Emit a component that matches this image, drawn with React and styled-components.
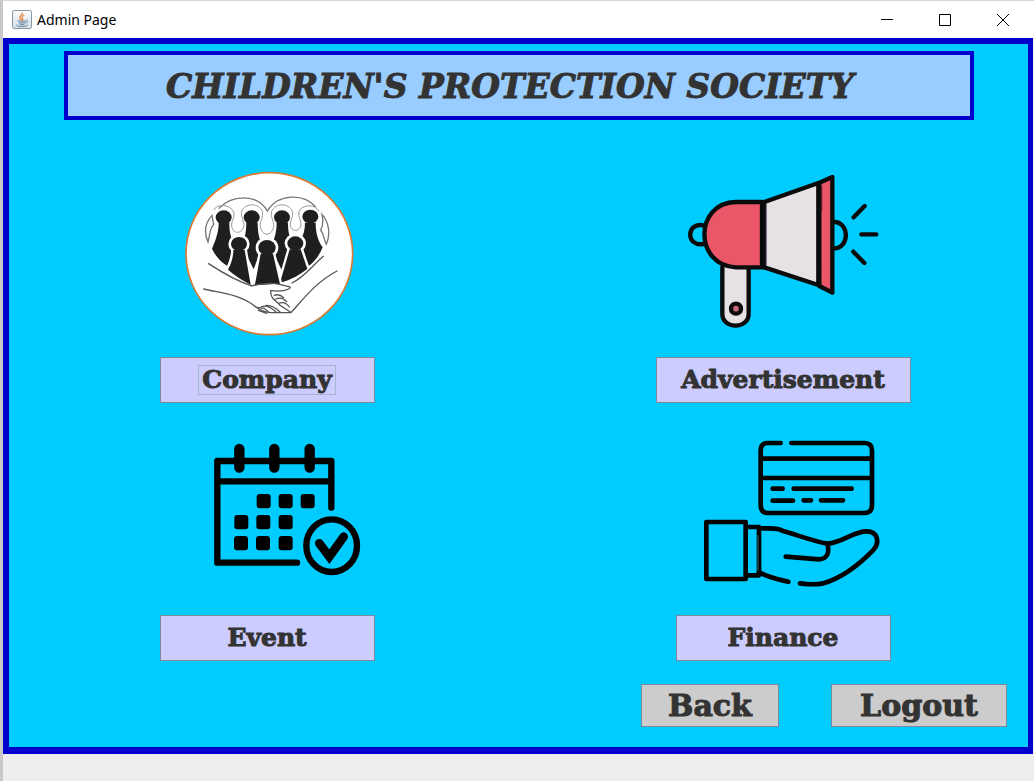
import React from "react";
import styled, { createGlobalStyle } from "styled-components";

const GlobalStyle = createGlobalStyle`
  *, *::before, *::after { box-sizing: border-box; }
  body { margin: 0; background: #eeeeee; }
`;

const slab = `"Rockwell Extra Bold", "DejaVu Serif", serif`;

const Window = styled.div`
  min-height: 100vh;
  background: #eeeeee;
  border-top: 1px solid #d6d6d6;
  border-left: 3px solid #c8c8c8;
  padding-right: 1px;
`;

const TitleBar = styled.header`
  display: flex;
  align-items: center;
  height: 37px;
  margin-right: -1px;
  padding: 0 2px 0 9px;
  background: #ffffff;
`;

const WindowTitle = styled.span`
  flex: 1;
  margin-left: 5px;
  font: 14px/20px "Segoe UI", "Noto Sans", sans-serif;
  color: #000000;
`;

const WindowButton = styled.button`
  display: flex;
  align-items: center;
  justify-content: center;
  width: 58px;
  height: 36px;
  padding: 0;
  border: 0;
  background: transparent;
`;

const Panel = styled.main`
  display: flex;
  flex-direction: column;
  padding: 7px 0 20px;
  background: #00ccff;
  border: solid #0000cc;
  border-width: 6px 5px 7px 6px;
`;

const Banner = styled.h1`
  display: flex;
  align-items: center;
  justify-content: center;
  height: 69px;
  margin: 0 54px 50px 55px;
  padding: 2px 18px 0 0;
  border: 4px solid #0000cc;
  background: #99ccff;
  color: #333333;
  font: italic bold 33px/40px ${slab};
  -webkit-text-stroke: 1px #333333;
  white-space: nowrap;
`;

const Tiles = styled.div`
  display: grid;
  grid-template-columns: 1fr 1fr;
  gap: 25px 36px;
  padding: 0 5px 0 18px;
`;

const Tile = styled.section`
  display: flex;
  flex-direction: column;
  align-items: center;
  gap: 19px;
`;

const Picture = styled.svg`
  display: block;
  width: 194px;
  height: 168px;
`;

const SwingButton = styled.button`
  display: flex;
  align-items: center;
  justify-content: center;
  padding: 0;
  border: 1px solid #7a8a99;
  border-radius: 0;
  color: #333333;
  font-family: ${slab};
  font-weight: bold;
  -webkit-text-stroke: 1px #333333;
  white-space: nowrap;
`;

const MenuButton = styled(SwingButton)`
  width: ${(p) => (p.$wide ? 255 : 215)}px;
  height: 46px;
  background: #ccccff;
  font-size: 25px;
  line-height: 28px;
`;

const ButtonLabel = styled.span`
  padding: 0 3px;
  border: 1px solid ${(p) => (p.$focused ? "#a3b8cc" : "transparent")};
`;

const Actions = styled.footer`
  display: flex;
  justify-content: flex-end;
  gap: 52px;
  margin-top: 23px;
  padding-right: 21px;
`;

const ActionButton = styled(SwingButton)`
  width: ${(p) => (p.$wide ? 176 : 138)}px;
  height: 43px;
  background: #cccccc;
  font-size: 30px;
  line-height: 36px;
`;

function JavaIcon() {
  return (
    <svg width="20" height="19" viewBox="0 0 60 57" fill="none" aria-hidden="true">
      <defs>
        <linearGradient id="java-tile" x1="0" y1="0" x2="0" y2="1">
          <stop offset="0" stopColor="#ffffff" />
          <stop offset="1" stopColor="#d3dde5" />
        </linearGradient>
      </defs>
      <rect x="1.5" y="1.5" width="57" height="54" rx="5" fill="url(#java-tile)" stroke="#8397a7" strokeWidth="3" />
      <path d="M30 8c5 6-9 9-7 16 1 4 5 5 6 8M37 15c-7 3-10 7-5 11 2 3 0 5-2 7" stroke="#e58b45" strokeWidth="4" />
      <path d="M17 31c-4 3 22 4 25 1M20 37c2 3 15 3 19 0M41 31c10-1 6 9-1 8M22 42c3 3 11 3 16 0M16 44c-10 6 24 8 31 1" stroke="#5b82a1" strokeWidth="3" />
    </svg>
  );
}

function Pawn({ x, y, r = 21, d }) {
  return (
    <g>
      <path d={d} fill="#fff" stroke="#fff" strokeWidth="14" strokeLinejoin="round" />
      <ellipse cx={x} cy={y} rx={r + 11} ry={r + 8} fill="#fff" />
      <path d={d} fill="#211e20" />
      <ellipse cx={x} cy={y} rx={r + 3} ry={r} fill="#211e20" />
    </g>
  );
}

function CompanyPicture() {
  return (
    <Picture viewBox="0 30 582 504" aria-hidden="true">
      <ellipse cx="298" cy="281" rx="250" ry="243" fill="#fff" stroke="#d97a35" strokeWidth="5" />
      <Pawn x={161} y={172} d="M146 188h32c0 24 3 42 12 54l-2 30-16 46c-20-12-36-30-46-52 10-24 20-48 20-78z" />
      <Pawn x={245} y={172} d="M229 188h34c0 30 5 52 14 68l-26 72-36-72c10-20 14-42 14-68z" />
      <Pawn x={336} y={172} d="M320 188h34c0 26 4 46 14 62l-30 87-36-77c11-20 18-44 18-72z" />
      <Pawn x={421} y={170} d="M405 188h32c0 30 6 52 21 74-9 22-23 42-42 56l-26-78c10-12 15-30 15-52z" />
      <Pawn x={207} y={252} d="M190 270h34l18 104c-24-12-48-27-68-45 10-18 16-38 16-59z" />
      <Pawn x={376} y={250} d="M359 268h33l20 58c-22 18-48 33-82 42z" />
      <Pawn x={291} y={263} r={23} d="M272 281h37l21 92-76 6z" />
      <g fill="none" stroke="#777" strokeWidth="4">
        <path d="M146 146c38-42 115-47 146 7 32-53 110-54 145-12" />
        <path d="M126 166c-20 22-25 50-12 80 6-19 4-42 17-52zM456 163c20 22 27 58 13 90-7-12-6-29-17-43 8-15 8-30 4-47z" />
      </g>
      <g fill="none" stroke="#999" strokeWidth="3">
        <path d="M131 150c10-20 50-18 60 6 5 20-8 26-6 42 4 26 30 24 36 2 4-16-10-26-6-46 10-26 52-26 62 0 4 20-8 28-6 46 6 30 34 30 40 0 2-18-10-26-6-46 10-26 52-26 62 0 4 20-8 26-6 44 6 18 24 18 32 0 2-18-10-26-6-44 10-22 50-22 60 0" />
      </g>
      <path d="M116 311c35 23 80 48 134 67 39-14 75-6 106 4 32-20 60-52 104-94l41 47c-55 34-91 72-137 124l-31 3h-75c-42-42-101-57-157-74z" fill="#fff" />
      <path d="M253 376l23-17h34l18 9-24 5z" fill="#211e20" />
      <g fill="none" stroke="#555" strokeWidth="4" strokeLinecap="round">
        <path d="M116 311c36 24 84 52 130 67 17-7 62-11 86-4 21 7 36 4 24 13-16 8-30 8-54 5" />
        <path d="M366 369c38-18 56-47 94-80M501 333c-63 34-94 76-138 125h-60c-23 0-41-12-56-25-38-29-94-34-146-46" />
        <path d="M302 392c-2 25 18 30 28 44l31 20M313 406c13-5 20-1 28 7M317 417c12-5 23-3 33 8M326 430c13-5 24-1 32 11M260 442l23 3 15 13M265 451l25 9M275 440c14-5 28 2 44 17M288 436c16-1 29 7 42 20" />
      </g>
    </Picture>
  );
}

function MegaphonePicture() {
  return (
    <Picture viewBox="48 30 582 504" aria-hidden="true">
      <g stroke="#0b0b0b" strokeWidth="13" strokeLinejoin="round" strokeLinecap="round">
        <path d="M100 196c-52-10-53 65 0 56M493 186c46 1 46 78 0 79" fill="none" />
        <path d="M157 322v139c0 48 79 48 79 0V322" fill="#e6e1e5" />
        <path d="M276 126h-79c-125 3-125 190 0 196h79z" fill="#eb5769" />
        <path d="M283 126L445 69v306L283 322z" fill="#e6e1e5" />
        <path d="M448 68l39-17v347l-39-20z" fill="#eb5769" />
        <path d="M281 126v196" fill="none" />
        <circle cx="198" cy="446" r="15" fill="#c3677b" />
        <path d="M551 172l33-34M574 223h45M550 275l33 34" fill="none" />
      </g>
      <path d="M289 132v185" stroke="#85758d" strokeWidth="3" />
      <path d="M455 78v75" stroke="#66222c" strokeWidth="4" />
    </Picture>
  );
}

const calendarDays = [
  [170, 192], [236, 192], [302, 192],
  [103, 255], [169, 255], [236, 255],
  [102, 318], [168, 318], [236, 318],
];

function CalendarPicture() {
  return (
    <Picture viewBox="-90 -6 582 504" aria-hidden="true">
      <g fill="none" stroke="#000" strokeWidth="19" strokeLinecap="round" strokeLinejoin="round">
        <path d="M291 398H52V93h342v140M52 154h342" />
        <path d="M118 57v56M223 57v56M329 57v56" strokeWidth="31" />
        <ellipse cx="395" cy="347" rx="76" ry="79" />
        <path d="M358 340l30 40 43-60" strokeWidth="26" strokeLinejoin="miter" />
      </g>
      {calendarDays.map(([x, y]) => (
        <rect key={`${x}-${y}`} x={x} y={y} width="42" height="43" rx="9" />
      ))}
    </Picture>
  );
}

function FinancePicture() {
  return (
    <Picture viewBox="-12 -6 582 504" aria-hidden="true">
      <g fill="none" stroke="#000" strokeWidth="14" strokeLinecap="round" strokeLinejoin="round">
        <path d="M272 39h-38q-22 0-22 23v163q0 24 22 24h290q22 0 22-24V62q0-23-22-23H304M212 86h334M212 144h334" />
        <path d="M248 176h30M311 176h174M248 212h61M341 211h22M393 211h66" />
        <path d="M49 276h118v171H49zM170 291h37v145h-37" />
        <path d="M207 294c24 4 52-4 72 9 40 11 91 31 133 38 45-3 79-37 117-37 36 0 41 35 20 57-45 46-91 82-149 99-22 4-47 3-70 0M412 341c8 27-1 46-25 47l-100-8M207 426c23 16 57 22 88 29" />
      </g>
      <path d="M204 315v107" stroke="#25525c" strokeWidth="4" />
    </Picture>
  );
}

const tiles = [
  { label: "Company", Image: CompanyPicture, focused: true },
  { label: "Advertisement", Image: MegaphonePicture, wide: true },
  { label: "Event", Image: CalendarPicture },
  { label: "Finance", Image: FinancePicture },
];

export default function App() {
  return (
    <>
      <GlobalStyle />
      <Window>
        <TitleBar>
          <JavaIcon />
          <WindowTitle>Admin Page</WindowTitle>
          <WindowButton aria-label="Minimize">
            <svg width="12" height="12" stroke="#000"><path d="M0 5.5h12" /></svg>
          </WindowButton>
          <WindowButton aria-label="Maximize">
            <svg width="12" height="12" stroke="#000" fill="none"><path d="M.5.5h11v11H.5z" /></svg>
          </WindowButton>
          <WindowButton aria-label="Close">
            <svg width="12" height="12" stroke="#000"><path d="M0 0l12 12M12 0L0 12" /></svg>
          </WindowButton>
        </TitleBar>
        <Panel>
          <Banner>CHILDREN'S PROTECTION SOCIETY</Banner>
          <Tiles>
            {tiles.map(({ label, Image, wide, focused }) => (
              <Tile key={label}>
                <Image />
                <MenuButton type="button" $wide={wide}>
                  <ButtonLabel $focused={focused}>{label}</ButtonLabel>
                </MenuButton>
              </Tile>
            ))}
          </Tiles>
          <Actions>
            <ActionButton type="button">Back</ActionButton>
            <ActionButton type="button" $wide>Logout</ActionButton>
          </Actions>
        </Panel>
      </Window>
    </>
  );
}
